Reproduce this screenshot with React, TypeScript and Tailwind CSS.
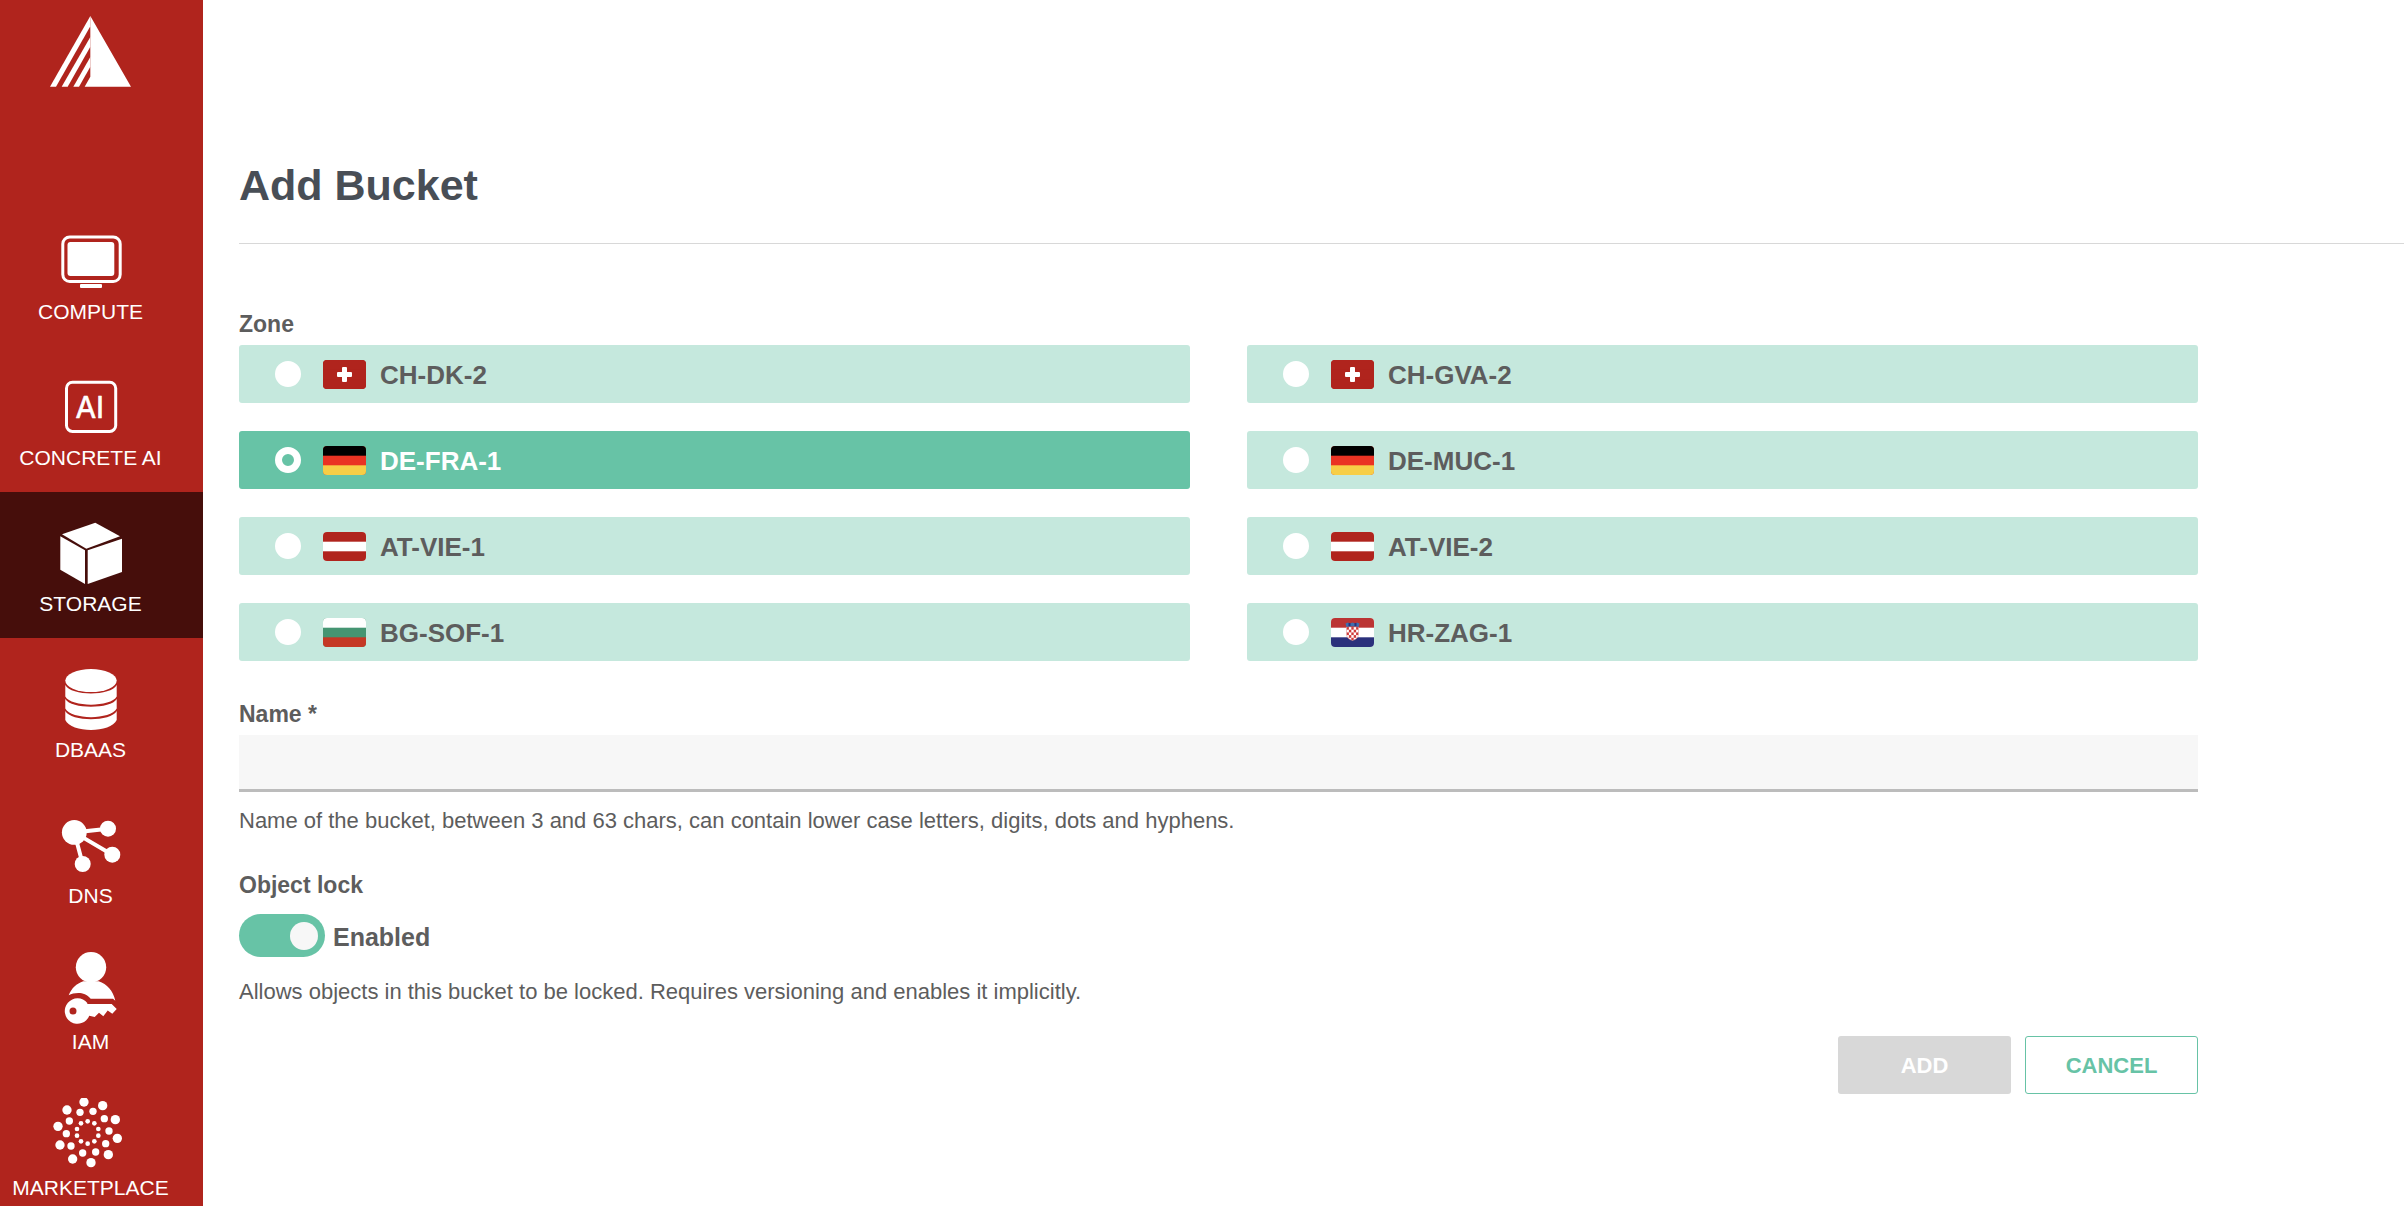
import React, { useState } from 'react';

const outerDots = [[252, 542], [308, 553], [346, 595], [352, 651], [325, 700], [273, 724], [218, 713], [180, 671], [174, 615], [201, 566]];
const middleDots = [[279, 570], [313, 592], [327, 629], [317, 667], [287, 692], [248, 695], [213, 674], [199, 637], [208, 599], [240, 573]];
const innerDots = [[263, 600], [283, 606], [295, 623], [295, 643], [283, 660], [263, 667], [243, 660], [231, 643], [231, 623], [243, 606]];

function Logo() {
  return (
    <svg className="w-[81px] h-[71px]" viewBox="150 49 243 213" fill="currentColor" aria-hidden="true">
      <path d="M271 49L150 261H168L271 80Z" />
      <path d="M271 112L185 261H203L271 141Z" />
      <path d="M271 172L220 261H237L271 201Z" />
      <path d="M271 49L393 261H254L271 231Z" />
    </svg>
  );
}

function NavIcon({ viewBox = '0 0 80 72', children }: { viewBox?: string; children: React.ReactNode }) {
  return (
    <svg className="w-20 h-[72px]" viewBox={viewBox} fill="currentColor" aria-hidden="true">
      {children}
    </svg>
  );
}

function ComputeIcon() {
  return (
    <NavIcon>
      <rect x="11.8" y="15" width="57.4" height="44.5" rx="7" fill="none" stroke="currentColor" strokeWidth="3" />
      <rect x="16.5" y="20" width="46.8" height="34" rx="3" />
      <rect x="29" y="62" width="22" height="4" rx="1" />
    </NavIcon>
  );
}

function AiIcon() {
  return (
    <NavIcon>
      <rect x="15.5" y="14.2" width="49.2" height="49.2" rx="6" fill="none" stroke="currentColor" strokeWidth="3" />
      <text x="38.8" y="49.7" textAnchor="middle" fontFamily="Inter, sans-serif" fontSize="30" stroke="currentColor" strokeWidth="0.6" strokeLinejoin="round">AI</text>
    </NavIcon>
  );
}

function StorageIcon() {
  return (
    <NavIcon>
      <path d="M11 20.3L44.3 8.7L69 22.3L35.3 34.7Z" />
      <path d="M9.3 22.3L34 36.3V70L9.3 55.7Z" />
      <path d="M36.7 36.3L71 24.7V58L36.7 70Z" />
    </NavIcon>
  );
}

function DbaasIcon() {
  return (
    <NavIcon>
      <ellipse cx="40" cy="20.6" rx="25.7" ry="11.5" />
      <path d="M14.3 25C20 36.3 60 36.3 65.7 25V36.6C60 47.3 20 47.3 14.3 36.6Z" />
      <path d="M14.3 39C20 49.3 60 49.3 65.7 39V48.6C60 60 20 60 14.3 48.6Z" />
      <path d="M14.3 51C20 62 60 62 65.7 51V60C60 73.3 20 73.3 14.3 60Z" />
    </NavIcon>
  );
}

function DnsIcon() {
  return (
    <NavIcon>
      <path d="M57 22.7L23.3 26.4L61.3 48.7M23.3 26.4L31.7 58" fill="none" stroke="currentColor" strokeWidth="4" />
      <circle cx="23.3" cy="26.4" r="12.4" />
      <circle cx="57" cy="22.7" r="8" />
      <circle cx="61.3" cy="48.7" r="8" />
      <circle cx="31.7" cy="58" r="8" />
    </NavIcon>
  );
}

function IamIcon() {
  return (
    <NavIcon>
      <circle cx="40" cy="15.3" r="15.2" />
      <path d="M32.3 29.2H47.7C56 32 62 38.5 64.3 48.7L62 46.7H39.7C36 42.5 32 41 27.3 41C23.5 41 20.5 41.8 17.7 43.3C20.5 36 25.5 31.5 32.3 29.2Z" />
      <path
        fillRule="evenodd"
        d="M36.3 52H60.7L65.7 57L61.3 61.7L56.7 58.5L52.3 64.3L48 60.7L43.7 65L38.3 63.7A12.7 12.7 0 1 1 36.3 51ZM22 55.5A3.5 3.5 0 1 0 22 62.5A3.5 3.5 0 1 0 22 55.5Z"
      />
    </NavIcon>
  );
}

function MarketplaceIcon() {
  return (
    <NavIcon viewBox="153 530 240 216">
      {outerDots.map(([x, y]) => <circle key={`${x}-${y}`} cx={x} cy={y} r="14" />)}
      {middleDots.map(([x, y]) => <circle key={`${x}-${y}`} cx={x} cy={y} r="11" />)}
      {innerDots.map(([x, y]) => <circle key={`${x}-${y}`} cx={x} cy={y} r="7" />)}
    </NavIcon>
  );
}

const navItems = [
  { label: 'COMPUTE', icon: ComputeIcon },
  { label: 'CONCRETE AI', icon: AiIcon },
  { label: 'STORAGE', icon: StorageIcon, active: true },
  { label: 'DBAAS', icon: DbaasIcon },
  { label: 'DNS', icon: DnsIcon },
  { label: 'IAM', icon: IamIcon },
  { label: 'MARKETPLACE', icon: MarketplaceIcon },
];

const stripes: Record<string, string[]> = {
  ch: ['#b0241d', '#b0241d', '#b0241d'],
  de: ['#000000', '#ea3323', '#f7ce46'],
  at: ['#b0241d', '#ffffff', '#b0241d'],
  bg: ['#ffffff', '#459572', '#c53825'],
  hr: ['#bb3433', '#ffffff', '#2b317c'],
};

const checks = [0, 1, 2, 3, 4]
  .flatMap((row) => [0, 1, 2, 3, 4].map((col) => ({ row, col })))
  .filter(({ row, col }) => (row + col) % 2 === 0);

const shieldPath = 'M15.5 9H27.5V16C27.5 19.5 25 21.5 21.5 22.5C18 21.5 15.5 19.5 15.5 16Z';

function Flag({ country }: { country: string }) {
  const [top, middle, bottom] = stripes[country];
  return (
    <svg className="w-[43px] h-[29px] rounded-[4px] overflow-hidden shrink-0" viewBox="0 0 43 29" aria-hidden="true">
      <rect width="43" height="29" fill={middle} />
      <rect width="43" height="9.7" fill={top} />
      <rect y="19.3" width="43" height="9.7" fill={bottom} />
      {country === 'ch' && (
        <g fill="#ffffff">
          <rect x="19" y="7" width="5" height="15" rx="1" />
          <rect x="14" y="12" width="15" height="5" rx="1" />
        </g>
      )}
      {country === 'hr' && (
        <g>
          <clipPath id="hr-shield">
            <path d={shieldPath} />
          </clipPath>
          <g clipPath="url(#hr-shield)">
            <rect x="15" y="9" width="13" height="14" fill="#ffffff" />
            {checks.map(({ row, col }) => (
              <rect key={`${row}-${col}`} x={15.5 + col * 2.4} y={9 + row * 2.7} width="2.4" height="2.7" fill="#cf3a3a" />
            ))}
          </g>
          <path d={shieldPath} fill="none" stroke="#d98080" strokeWidth="0.5" />
          <path d="M14.5 5.5L17 4.5L19 5.5L21.5 4.5L24 5.5L26 4.5L28.5 5.5L27.5 9Q21.5 7.5 15.5 9Z" fill="#3f6fae" />
          <path d="M17.5 5H19.5V8H17.5ZM23.5 5H25.5V8H23.5Z" fill="#2b317c" />
        </g>
      )}
    </svg>
  );
}

const zones = [
  { name: 'CH-DK-2', country: 'ch' },
  { name: 'CH-GVA-2', country: 'ch' },
  { name: 'DE-FRA-1', country: 'de' },
  { name: 'DE-MUC-1', country: 'de' },
  { name: 'AT-VIE-1', country: 'at' },
  { name: 'AT-VIE-2', country: 'at' },
  { name: 'BG-SOF-1', country: 'bg' },
  { name: 'HR-ZAG-1', country: 'hr' },
];

function Sidebar() {
  return (
    <aside className="sticky top-0 h-screen w-[203px] shrink-0 overflow-y-auto [scrollbar-width:none] bg-[#b0241d] text-white">
      <a href="#home" aria-label="Home" className="flex h-[200px] justify-center pt-4 pr-[22px]">
        <Logo />
      </a>
      <nav>
        {navItems.map(({ label, icon: Icon, active }) => (
          <a
            key={label}
            href={`#${label.toLowerCase().replace(' ', '-')}`}
            className={`flex h-[146px] flex-col items-center gap-1.5 pt-[22px] pr-[22px] ${active ? 'bg-[#460e0b]' : ''}`}
          >
            <Icon />
            <span className="text-[21px] leading-6 whitespace-nowrap">{label}</span>
          </a>
        ))}
      </nav>
    </aside>
  );
}

export default function App() {
  const [zone, setZone] = useState('DE-FRA-1');
  const [name, setName] = useState('');
  const [locked, setLocked] = useState(true);

  return (
    <div className="flex min-h-screen bg-white font-['Liberation_Sans',Arial,sans-serif] text-[#5d5d5d]">
      <Sidebar />
      <main className="flex-1 min-w-0 pl-9 pt-40">
        <h1 className="border-b border-[#d8d8d8] pb-[33px] text-[43px] leading-[50px] font-bold text-[#484e56]">Add Bucket</h1>

        <form className="mr-[206px] pt-[67px]" onSubmit={(e) => e.preventDefault()}>
          <fieldset>
            <legend className="mb-2 text-[23px] leading-[26px] font-bold">Zone</legend>
            <div className="grid grid-cols-2 gap-x-[57px] gap-y-7">
              {zones.map(({ name: zoneName, country }) => (
                <label
                  key={zoneName}
                  className={`flex h-[58px] items-center rounded-[3px] pl-9 ${zone === zoneName ? 'bg-[#67c3a6] text-white' : 'bg-[#c5e8dd]'}`}
                >
                  <input
                    type="radio"
                    name="zone"
                    value={zoneName}
                    checked={zone === zoneName}
                    onChange={() => setZone(zoneName)}
                    className="size-[26px] shrink-0 appearance-none rounded-full border-[7px] border-white bg-white checked:bg-[#67c3a6]"
                  />
                  <span className="ml-[22px] flex items-center gap-3.5">
                    <Flag country={country} />
                    <span className="pt-0.5 text-[26px] leading-[30px] font-bold">{zoneName}</span>
                  </span>
                </label>
              ))}
            </div>
          </fieldset>

          <div className="mt-10">
            <label htmlFor="bucket-name" className="mb-2 block text-[23px] leading-[26px] font-bold">Name *</label>
            <input
              id="bucket-name"
              type="text"
              value={name}
              onChange={(e) => setName(e.target.value)}
              className="block h-[57px] w-full border-b-[3px] border-[#bcbcbc] bg-[#f7f7f7] px-4 text-[22px] outline-none"
            />
            <p className="mt-4 text-[22px] leading-[26px]">
              Name of the bucket, between 3 and 63 chars, can contain lower case letters, digits, dots and hyphens.
            </p>
          </div>

          <div className="mt-[38px]">
            <span id="lock-label" className="block text-[23px] leading-[26px] font-bold">Object lock</span>
            <label className="mt-4 flex w-fit items-center gap-2">
              <input
                type="checkbox"
                role="switch"
                aria-describedby="lock-label"
                checked={locked}
                onChange={(e) => setLocked(e.target.checked)}
                className="flex h-[43px] w-[86px] appearance-none items-center rounded-full bg-[#d8d8d8] px-[7px] before:size-7 before:rounded-full before:bg-[#f7f7f7] checked:justify-end checked:bg-[#67c3a6]"
              />
              <span className="pt-0.5 text-[25px] leading-[30px] font-bold">Enabled</span>
            </label>
            <p className="mt-[22px] text-[22px] leading-[26px]">
              Allows objects in this bucket to be locked. Requires versioning and enables it implicitly.
            </p>
          </div>

          <div className="mt-[31px] flex justify-end gap-3.5">
            <button type="submit" disabled={!name} className="h-[58px] w-[173px] rounded-[3px] bg-[#67c3a6] text-[22px] font-bold text-white disabled:bg-[#d8d8d8]">
              ADD
            </button>
            <button type="button" className="h-[58px] w-[173px] rounded-[3px] border border-[#67c3a6] text-[22px] font-bold text-[#67c3a6]">
              CANCEL
            </button>
          </div>
        </form>
      </main>
    </div>
  );
}
